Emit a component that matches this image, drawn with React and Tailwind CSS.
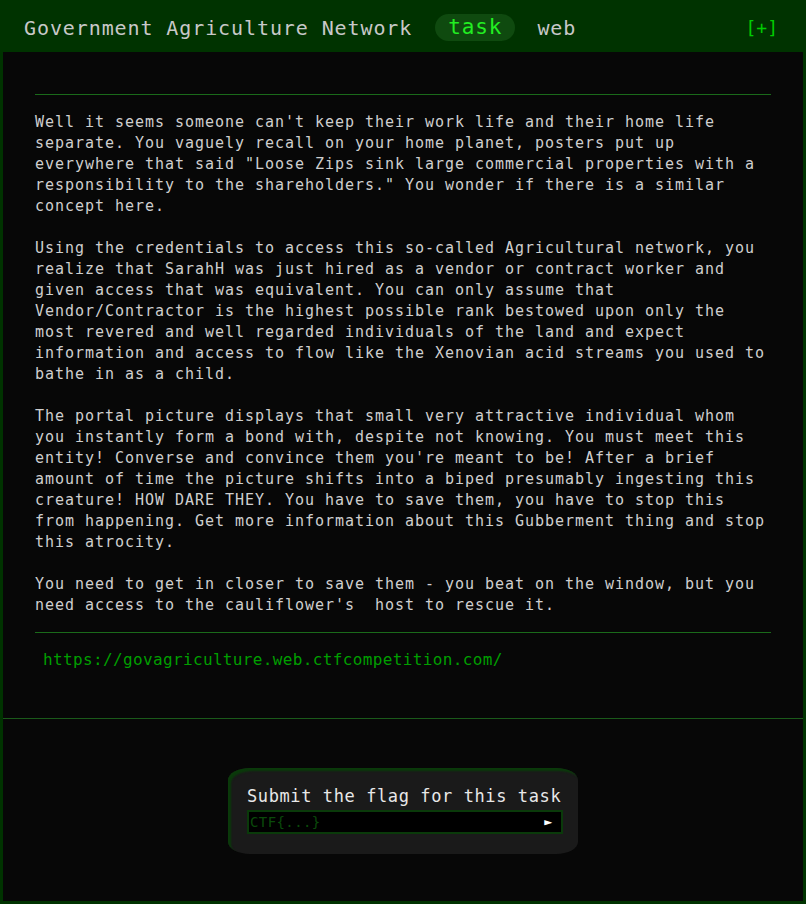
import React from "react";

const mono = { fontFamily: '"DejaVu Sans Mono", "Liberation Mono", monospace' };

export default function App() {
  return (
    <div
      className="w-[806px] h-[904px] flex flex-col bg-[#070707] border-[3px] border-t-0 border-[#003300]"
      style={mono}
    >
      <header className="h-[52px] -mx-[3px] bg-[#003300] flex items-center pl-[24px] pr-[28px] pt-[3px] shrink-0">
        <span className="text-[20px] tracking-[0.9px] text-[#c8c8c8]">Government Agriculture Network</span>
        <span className="ml-[23px] h-[27px] px-[13px] rounded-full bg-[#0f4a0f] flex items-center text-[21px] tracking-[0.9px] text-[#22ee22]">task</span>
        <span className="ml-[22px] text-[20px] tracking-[0.9px] text-[#c8c8c8]">web</span>
        <span className="ml-auto text-[18px] text-[#00cc00]">[+]</span>
      </header>
      <main className="px-[32px] pt-[42px]">
        <div className="h-px bg-[#1a6a1a]" />
        <div className="pt-[17px] pb-[16px] text-[15px] leading-[21px] tracking-[0.97px] text-[#cfcfcf] whitespace-pre-wrap">
          <p>
            Well it seems someone can't keep their work life and their home life separate. You vaguely recall on your home planet, posters put up everywhere that said "Loose Zips sink large commercial properties with a responsibility to the shareholders." You wonder if there is a similar concept here.
          </p>
          <p className="mt-[21px]">
            Using the credentials to access this so-called Agricultural network, you realize that SarahH was just hired as a vendor or contract worker and given access that was equivalent. You can only assume that Vendor/Contractor is the highest possible rank bestowed upon only the most revered and well regarded individuals of the land and expect information and access to flow like the Xenovian acid streams you used to bathe in as a child.
          </p>
          <p className="mt-[21px]">
            The portal picture displays that small very attractive individual whom you instantly form a bond with, despite not knowing. You must meet this entity! Converse and convince them you're meant to be! After a brief amount of time the picture shifts into a biped presumably ingesting this creature! HOW DARE THEY. You have to save them, you have to stop this from happening. Get more information about this Gubberment thing and stop this atrocity.
          </p>
          <p className="mt-[21px]">
            {"You need to get in closer to save them - you beat on the window, but you need access to the cauliflower's  host to rescue it."}
          </p>
        </div>
        <div className="h-px bg-[#1a6a1a]" />
        <div className="pl-[8px] pt-[15px] h-[85px]">
          <span className="text-[16px] leading-[20px] tracking-[0.36px] text-[#009e00]">https://govagriculture.web.ctfcompetition.com/</span>
        </div>
      </main>
      <div className="h-px bg-[#1a5a1a]" />
      <div className="flex justify-center pt-[49px]">
        <div className="w-[350px] h-[86px] bg-[#1a1a1a] rounded-[22px/12px] shadow-[inset_3px_3px_2px_#0a3a0a] pl-[19px] pt-[18px]">
          <div className="text-[17px] leading-[20px] tracking-[0.6px] text-[#e8e8e8]">Submit the flag for this task</div>
          <div className="mt-[4px] w-[316px] h-[24px] bg-black border-2 border-[#0a3a0a] flex items-center px-[1px]">
            <span className="text-[14px] text-[#0a4a0a] tracking-[0.4px]">CTF{"{...}"}</span>
            <span className="ml-auto mr-[8px] text-[13px] text-white">►</span>
          </div>
        </div>
      </div>
    </div>
  );
}
